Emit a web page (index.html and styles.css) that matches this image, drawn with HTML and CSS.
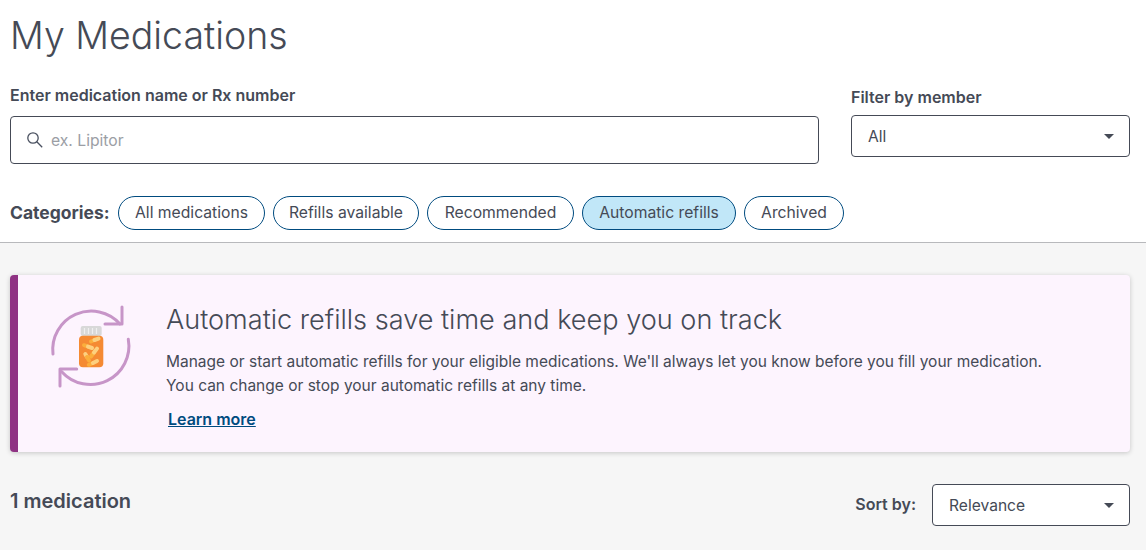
FILE: index.html
```html
<!DOCTYPE html>
<html lang="en">
  <head>
    <meta charset="UTF-8" />
    <meta name="viewport" content="width=device-width, initial-scale=1.0" />
    <title>My Medications</title>
    <link rel="stylesheet" href="styles.css">
  </head>
  <body>
    <div class="top">
      <h1>My Medications</h1>
      <div class="search-row">
        <div class="search-col">
          <label class="field-label">Enter medication name or Rx number</label>
          <div class="search-box">
            <svg class="search-icon" width="18" height="18" viewBox="0 0 18 18" fill="none" stroke="#4a5160" stroke-width="1.3">
              <circle cx="7" cy="7" r="5.2" />
              <path d="M10.800 10.800l5.400 5.400" />
            </svg>
            <span class="placeholder">ex. Lipitor</span>
          </div>
        </div>
        <div class="filter-col">
          <label class="field-label">Filter by member</label>
          <div class="select">
            <span>All</span>
            <span class="caret"></span>
          </div>
        </div>
      </div>
      <div class="categories">
        <span class="cat-label">Categories:</span>
        <span class="pill pill-1">All medications</span>
        <span class="pill pill-2">Refills available</span>
        <span class="pill pill-3">Recommended</span>
        <span class="pill pill-4 active">Automatic refills</span>
        <span class="pill pill-5">Archived</span>
      </div>
    </div>
    <div class="bottom">
      <div class="banner">
        <div class="banner-icon">
          <svg width="84" height="84" viewBox="0 0 84 84" fill="none">
            <g stroke="#c795c8" stroke-width="3" stroke-linecap="round" stroke-linejoin="round">
              <path d="M3 50A38.500 38.500 0 0 1 70 20" />
              <path d="M72 3V20H55" />
              <path d="M78.300 35.300A38.500 38.500 0 0 1 11.700 67.700" />
              <path d="M10 82V65H26.700" />
            </g>
            <rect x="30.700" y="22" width="21" height="10" rx="2" fill="#d8d8d8" />
            <path d="M34.500 24v6M38.500 24v6M42.500 24v6M46.500 24v6" stroke="#efefef" stroke-width="1.200" />
            <rect x="29" y="31.700" width="24.300" height="31.600" rx="4" fill="#f58a33" />
            <g stroke-width="4" stroke-linecap="round">
              <path d="M41 37.500L44.500 36" stroke="#fbae3c" />
              <path d="M44.500 36L48.500 34.600" stroke="#fdd07f" />
              <path d="M34 41.200L38 42.600" stroke="#fbae3c" />
              <path d="M38 42.600L42 44" stroke="#fdd07f" />
              <path d="M41 52.500L44 48.500" stroke="#fbae3c" />
              <path d="M44 48.500L47 44.600" stroke="#fdd07f" />
              <path d="M35.300 50L37 53" stroke="#fdd07f" />
              <path d="M37 53L39 56.400" stroke="#fbae3c" />
              <path d="M38.800 60.800L43 59" stroke="#fbae3c" />
              <path d="M43 59L47 57" stroke="#fdd07f" />
            </g>
          </svg>
        </div>
        <div class="banner-text">
          <h2>Automatic refills save time and keep you on track</h2>
          <p>Manage or start automatic refills for your eligible medications. We'll always let you know before you fill your medication.<br />You can change or stop your automatic refills at any time.</p>
          <a href="#" class="learn">Learn more</a>
        </div>
      </div>
      <div class="results-row">
        <div class="count">1 medication</div>
        <div class="sort">
          <span class="sort-label">Sort by:</span>
          <div class="select sort-select">
            <span>Relevance</span>
            <span class="caret"></span>
          </div>
        </div>
      </div>
    </div>
  </body>
</html>
```

FILE: styles.css
```css
* {
  box-sizing: border-box;
}
html,
body {
  height: 100%;
}
body {
  margin: 0;
  display: flex;
  flex-direction: column;
  overflow: hidden;
  font-family: "Inter", "Liberation Sans", sans-serif;
  color: #454a56;
  background-color: #f6f6f6;
}
.top {
  height: 243px;
  padding: 0 16px 0 10px;
  background-color: #fff;
  border-bottom: 1px solid #b8b9bc;
}
h1 {
  margin: 0;
  height: 84px;
  padding-top: 14px;
  font-size: 37.500px;
  line-height: 44px;
  font-weight: 300;
}
.search-row {
  display: flex;
  gap: 32px;
}
.search-col {
  width: 809px;
}
.filter-col {
  width: 279px;
  padding-top: 2px;
}
.field-label {
  display: block;
  font-size: 16px;
  line-height: 22px;
  font-weight: 600;
}
.search-col .field-label {
  height: 32px;
}
.filter-col .field-label {
  height: 29px;
}
.search-box {
  height: 48px;
  display: flex;
  align-items: center;
  gap: 7px;
  padding-left: 15px;
  border: 1px solid #454a56;
  border-radius: 4px;
}
.placeholder {
  font-size: 15.700px;
  color: #9b9ea5;
}
.select {
  height: 42px;
  display: flex;
  align-items: center;
  justify-content: space-between;
  padding: 0 15px 0 16px;
  border: 1px solid #454a56;
  border-radius: 4px;
  background-color: #fff;
  font-size: 15.600px;
}
.caret {
  width: 0;
  height: 0;
  border-left: 5px solid transparent;
  border-right: 5px solid transparent;
  border-top: 5px solid #454a56;
}
.categories {
  display: flex;
  align-items: center;
  gap: 8px;
  margin-top: 32px;
}
.cat-label {
  width: 100px;
  font-size: 17.500px;
  font-weight: 700;
  margin-top: -2px;
  white-space: nowrap;
}
.pill {
  height: 34px;
  display: flex;
  align-items: center;
  justify-content: center;
  padding-bottom: 2px;
  border: 1px solid #004b7f;
  border-radius: 17px;
  font-size: 15.700px;
  background-color: #fff;
}
.pill-1 {
  width: 147px;
}
.pill-2 {
  width: 146px;
}
.pill-3 {
  width: 147px;
}
.pill-4 {
  width: 154px;
}
.pill-5 {
  width: 100px;
}
.pill.active {
  background-color: #c1e7f8;
}
.bottom {
  flex: 1;
  padding: 32px 16px 0 10px;
}
.banner {
  height: 177px;
  display: flex;
  background-color: #fdf4fe;
  border-left: 8px solid #8f3283;
  border-radius: 4px;
  box-shadow: 0 1px 5px rgba(0, 0, 0, 0.2);
}
.banner-icon {
  width: 148px;
  padding: 29px 0 0 32px;
}
.banner-text {
  padding-top: 26px;
}
.banner-text h2 {
  margin: 0;
  font-size: 27.100px;
  line-height: 38px;
  font-weight: 300;
}
.banner-text p {
  margin: 11px 0 0;
  font-size: 15.500px;
  line-height: 24px;
}
.learn {
  display: inline-block;
  margin: 11px 0 0 2px;
  font-size: 16px;
  font-weight: 600;
  color: #004b7f;
}
.results-row {
  display: flex;
  justify-content: space-between;
  align-items: center;
  margin-top: 32px;
}
.count {
  font-size: 20px;
  font-weight: 600;
  margin-top: -8px;
}
.sort {
  display: flex;
  align-items: center;
  gap: 16px;
}
.sort-label {
  font-size: 16px;
  font-weight: 600;
  margin-top: -2px;
}
.sort-select {
  width: 198px;
}
```
